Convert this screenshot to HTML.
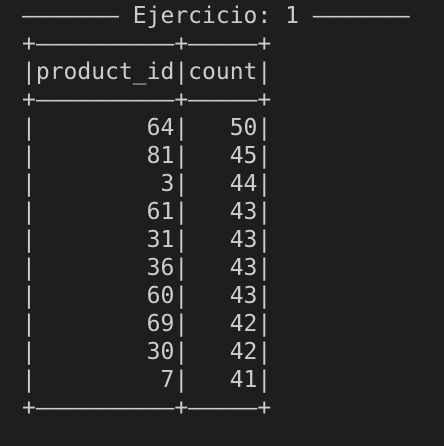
<!DOCTYPE html>
<html><head><meta charset="utf-8"><style>
html,body{margin:0;padding:0;background:#1e1e1e;width:444px;height:446px;overflow:hidden}
pre{margin:0;position:absolute;left:22px;top:2px;font-family:"DejaVu Sans Mono","Liberation Mono",monospace;font-size:23px;line-height:28px;color:#cccccc}
</style></head><body>
<pre>––––––– Ejercicio: 1 –––––––
+––––––––––+–––––+
|product_id|count|
+––––––––––+–––––+
|        64|   50|
|        81|   45|
|         3|   44|
|        61|   43|
|        31|   43|
|        36|   43|
|        60|   43|
|        69|   42|
|        30|   42|
|         7|   41|
+––––––––––+–––––+</pre>
</body></html>
